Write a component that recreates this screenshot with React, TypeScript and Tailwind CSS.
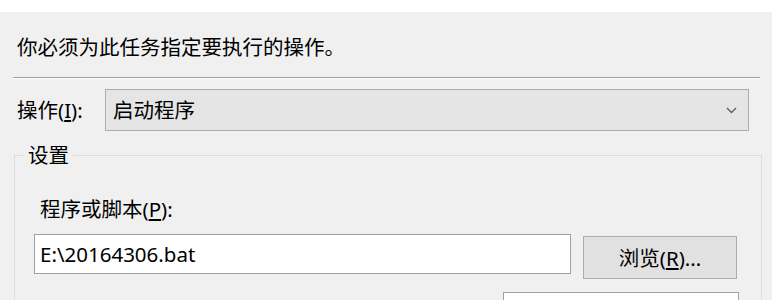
import React from "react";

const font = { fontFamily: '"Noto Sans", "Noto Sans CJK SC", sans-serif' };

export default function App() {
  return (
    <div
      className="w-[772px] h-[300px] overflow-hidden bg-[#f0f0f0] text-black text-[20.5px] leading-[28px]"
      style={font}
    >
      <div className="h-[12px] bg-white" />
      <div className="pt-[21px] pl-[17px]">你必须为此任务指定要执行的操作。</div>
      <div className="mt-[16px] ml-[13px] w-[747px] border-t border-t-[#a0a0a0] border-b border-b-white" />
      <div className="mt-[10px] flex items-center">
        <div className="w-[105px] pl-[17px]">
          操作(<span className="underline underline-offset-2">I</span>):
        </div>
        <div className="w-[644px] h-[42px] bg-[#e5e5e5] border border-[#adadad] flex items-center justify-between pl-[7px] pr-[10px]">
          <span>启动程序</span>
          <svg width="11" height="7" viewBox="0 0 11 7" className="mr-[1px]">
            <polyline points="1,1 5.5,5.5 10,1" fill="none" stroke="#5a5a5a" strokeWidth="1.3" />
          </svg>
        </div>
      </div>
      <div className="relative mt-[24px] ml-[14px] w-[748px] h-[200px] border border-[#dcdcdc]">
        <div className="absolute left-[9px] top-[-15px] px-[4px] bg-[#f0f0f0]">设置</div>
        <div className="pt-[39px] pl-[19px]">
          <div className="ml-[6px]">
            程序或脚本(<span className="underline underline-offset-2">P</span>):
          </div>
          <div className="mt-[11px] flex items-start">
            <div className="w-[537px] h-[40px] bg-white border border-[#a0a0a0] flex items-center pl-[5px]">
              E:\20164306.bat
            </div>
            <div className="ml-[12px] mt-[2px] w-[154px] h-[43px] bg-[#e1e1e1] border border-[#adadad] flex items-center justify-center">
              浏览(<span className="underline underline-offset-2">R</span>)...
            </div>
          </div>
          <div className="mt-[13px] ml-[469px] w-[236px] h-[40px] bg-white border border-[#a0a0a0]" />
        </div>
      </div>
    </div>
  );
}
